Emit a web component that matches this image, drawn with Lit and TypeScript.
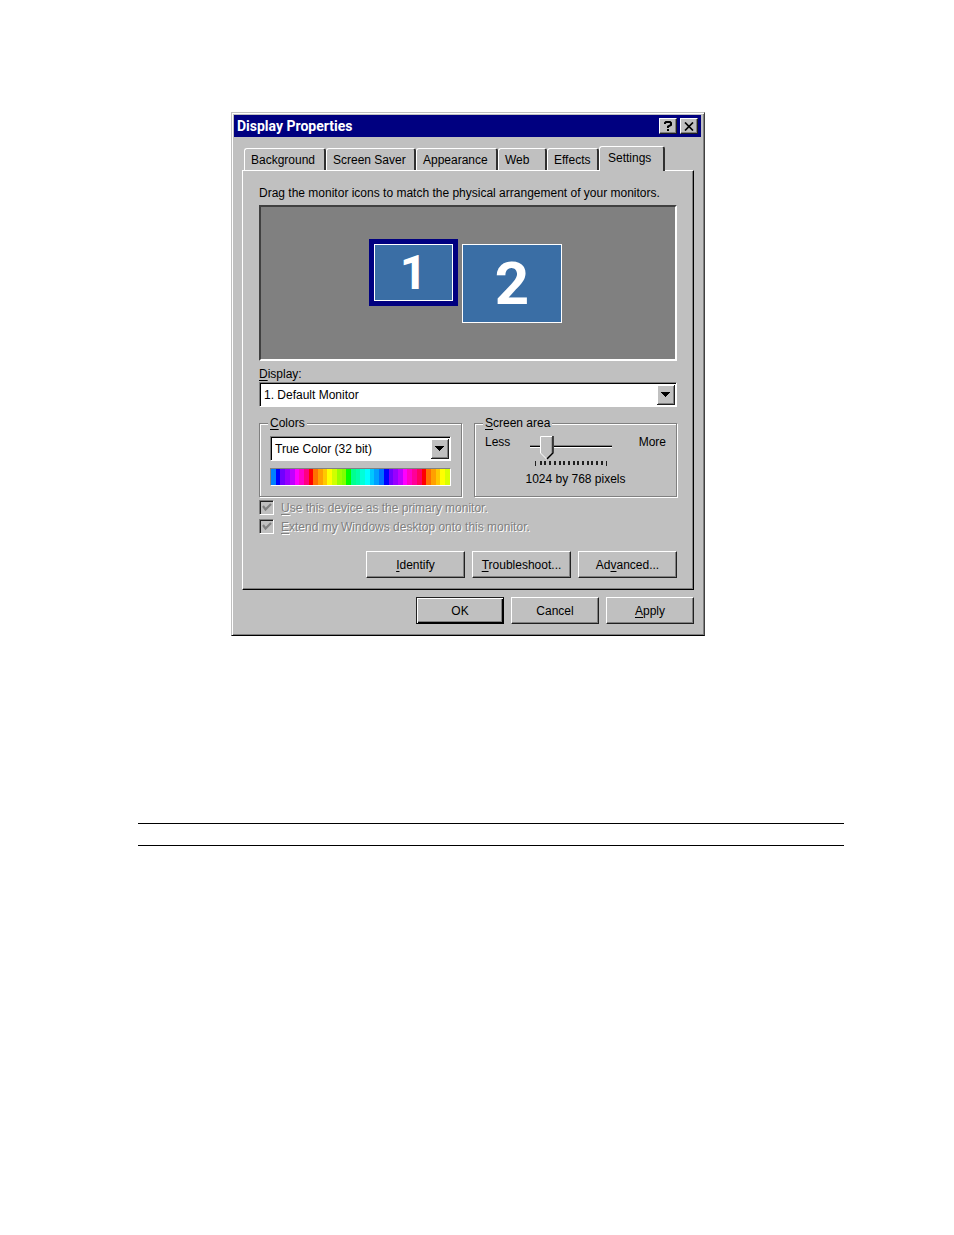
import { LitElement, html, css, svg } from "lit";
import { customElement, state } from "lit/decorators.js";

const SPECTRUM = [
  "#0080ff", "#0000ff", "#7000ff", "#9800ff", "#c000ff", "#ff00ff", "#ff00c8", "#ff0080",
  "#ff0000", "#ff7000", "#ffa000", "#ffc800", "#ffff00", "#d0ff00", "#98ff00", "#80ff00",
  "#00ff00", "#00ff90", "#00ffa8", "#00ffd8", "#00ffff", "#00c8ff", "#00a0ff", "#0070ff",
  "#0000ff", "#7000ff", "#9800ff", "#c000ff", "#ff00ff", "#ff00c8", "#ff0098", "#ff0060",
  "#ff0000", "#ff7000", "#ffa000", "#ffc800", "#ffff00", "#d8ff00",
];

@customElement("app-root")
export class AppRoot extends LitElement {
  @state() private tab = "Settings";
  private tabs = ["Background", "Screen Saver", "Appearance", "Web", "Effects", "Settings"];

  static styles = css`
    :host {
      display: block;
      background: #fff;
      color: #000;
      font: 12px/16px "Liberation Sans", Arial, sans-serif;
    }
    * { box-sizing: border-box; }
    button, select, input { font: inherit; color: inherit; border-radius: 0; margin: 0; }
    .page { padding: 112px 110px 0 138px; }
    .window {
      width: 474px;
      max-width: 100%;
      margin: 0 auto;
      background: #c0c0c0;
      border: 1px solid;
      border-color: #c0c0c0 #404040 #000 #c0c0c0;
      box-shadow: inset 1px 1px #fff, inset -1px -1px #808080;
      padding: 2px 3px 11px 2px;
    }
    .holder { padding-right: 46px; }
    .title {
      display: flex;
      align-items: center;
      gap: 3px;
      height: 22px;
      padding: 0 3px;
      background: #000080;
      color: #fff;
      font-weight: bold;
    }
    .title h1 { flex: 1; margin: 0; font: bold 14px/16px Roboto, Arial, sans-serif; }
    .title button {
      width: 18px;
      height: 16px;
      padding: 0;
      display: grid;
      place-items: center;
    }
    button {
      background: #c0c0c0;
      border: 1px solid;
      border-color: #fff #202020 #202020 #fff;
      box-shadow: inset -1px -1px #808080;
    }
    .body { padding: 9px 7px 0 8px; }
    .tabs {
      display: grid;
      grid-template-columns: 82fr 90fr 82fr 49fr 52fr 66fr;
      align-items: end;
      padding: 0 29px 0 2px;
    }
    .tab {
      height: 22px;
      padding: 0 0 0 6px;
      border-width: 1px 2px 0 1px;
      border-color: #fff #303030 #fff #fff;
      border-radius: 3px 3px 0 0;
      box-shadow: none;
      white-space: nowrap;
      text-align: left;
    }
    .tab.active {
      height: 25px;
      margin-bottom: -1px;
      padding: 0 0 3px 8px;
      position: relative;
    }
    .panel {
      border: 1px solid;
      border-color: #fff #000 #000 #fff;
      box-shadow: inset -1px -1px #808080;
      padding: 14px 16px 11px;
    }
    p { margin: 0; }
    .preview {
      display: flex;
      justify-content: center;
      align-items: flex-start;
      gap: 4px;
      height: 156px;
      margin-top: 4px;
      padding: 32px 5px 0 0;
      background: #808080;
      border: 2px solid;
      border-color: #404040 #fff #fff #404040;
    }
    .monitor {
      display: grid;
      place-items: center;
      background: #3a6ea5;
      color: #fff;
      border: 1px solid #fff;
      font-family: Roboto, Arial, sans-serif;
      font-weight: bold;
    }
    .one { width: 79px; height: 57px; font-size: 48px; line-height: 48px; }
    .selected { border: 5px solid #000080; background: #000080; }
    .two { width: 100px; height: 79px; margin-top: 5px; font-size: 60px; line-height: 60px; }
    .field { display: block; margin-top: 5px; }
    u { text-underline-offset: 2px; }
    .combo {
      display: grid;
      background: #fff;
      border: 1px solid;
      border-color: #808080 #fff #fff #808080;
      box-shadow: inset 1px 1px #000;
      height: 25px;
      padding: 2px 1px 1px 2px;
    }
    .combo select, .combo svg { grid-area: 1 / 1; }
    .combo select {
      appearance: none;
      width: 100%;
      padding: 0 2px;
      border: 0;
      background: transparent;
      outline: 0;
    }
    .combo svg { justify-self: end; pointer-events: none; }
    .groups { display: grid; grid-template-columns: 1fr 1fr; gap: 12px; margin-top: 8px; }
    fieldset {
      min-width: 0;
      margin: 0;
      padding: 5px 10px 8px;
      height: 82px;
      border: 1px solid #808080;
      box-shadow: 1px 1px #fff, inset 1px 1px #fff;
    }
    legend { padding: 0 2px; margin-left: -2px; background: #c0c0c0; }
    .spectrum {
      display: flex;
      height: 18px;
      margin-top: 7px;
      border: 1px solid;
      border-color: #808080 #fff #fff #808080;
    }
    .spectrum i { flex: 1; }
    .range { display: flex; gap: 20px; }
    .range span { line-height: 12px; }
    .range .more { margin-left: auto; }
    .slider { width: 82px; }
    .slider input {
      appearance: none;
      display: block;
      width: 100%;
      height: 24px;
      background: linear-gradient(#808080 0 1px, #000 1px 2px, #fff 2px 3px) center 9px / 100% 3px no-repeat;
    }
    .slider input::-webkit-slider-thumb {
      appearance: none;
      width: 14px;
      height: 24px;
      border: 0;
      background: url("data:image/svg+xml,%3Csvg xmlns='http://www.w3.org/2000/svg' width='14' height='24'%3E%3Cpath d='M0 0H14V17L7 24L0 17Z' fill='%23c0c0c0'/%3E%3Cpath d='M.5 17V.5H12M.5 17L7 23.5' fill='none' stroke='%23fff'/%3E%3Cpath d='M12 1V17L7 22' fill='none' stroke='%23808080'/%3E%3Cpath d='M13 0V17L7 23' fill='none' stroke='%23000' stroke-width='1.3'/%3E%3C/svg%3E");
    }
    .slider svg { display: block; margin: 1px 0 0 5px; }
    .resolution { text-align: center; margin-top: 4px; }
    .check {
      display: flex;
      align-items: center;
      gap: 7px;
      height: 19px;
      color: #808080;
      text-shadow: 1px 1px #fff;
    }
    .check input {
      appearance: none;
      width: 15px;
      height: 15px;
      border: 1px solid;
      border-color: #808080 #fff #fff #808080;
      box-shadow: inset 1px 1px #202020;
      background: url("data:image/svg+xml,%3Csvg xmlns='http://www.w3.org/2000/svg' width='13' height='13'%3E%3Cpath d='M3 5L5.500 8.500L11 3' fill='none' stroke='%23808080' stroke-width='2.2'/%3E%3C/svg%3E");
    }
    .checks { margin-top: 1px; }
    .actions { display: flex; justify-content: flex-end; gap: 7px; }
    .actions button { width: 99px; height: 27px; padding: 0; }
    .inner { margin-top: 15px; }
    .outer { margin-top: 7px; }
    .actions.outer button { width: 88px; }
    .actions .default {
      border-color: #202020 #000 #000 #202020;
      box-shadow: inset 1px 1px #fff, inset -1px -1px #000, inset -2px -2px #808080;
    }
    .rules { height: 23px; margin-top: 187px; border: solid #000; border-width: 1px 0; }
  `;

  private arrow() {
    return svg`<svg width="18" height="20" viewBox="0 0 18 20" shape-rendering="crispEdges" aria-hidden="true">
      <path d="M0 0H18V20H0Z" fill="#202020"/><path d="M0 0H17V19H0Z" fill="#fff"/>
      <path d="M1 1H17V19H1Z" fill="#808080"/><path d="M1 1H16V18H1Z" fill="#c0c0c0"/>
      <path d="M4 7H13V8H12V9H11V10H10V11H9V12H8V11H7V10H6V9H5V8H4Z" fill="#000"/></svg>`;
  }

  private tick(i: number) {
    const end = i === 0 || i === 15;
    return svg`<rect x=${Math.round(i * 4.7)} y="0" width=${end ? 1 : 2} height=${end ? 5 : 4} fill="#202020"/>`;
  }

  render() {
    return html`
      <main class="page">
        <div class="holder">
          <section class="window" aria-label="Display Properties">
            <header class="title">
              <h1>Display Properties</h1>
              <button aria-label="Help">
                <svg width="8" height="10" viewBox="0 0 8 10"><path d="M1 3V2L2 1H6L7 2V4L4 5.5V7" fill="none" stroke="#000" stroke-width="2"/><path d="M3 8H5V10H3Z"/></svg>
              </button>
              <button aria-label="Close">
                <svg width="10" height="9" viewBox="0 0 10 9"><path d="M1 .5L9 8.5M9 .5L1 8.5" stroke="#000" stroke-width="1.7"/></svg>
              </button>
            </header>
            <div class="body">
              <div class="tabs" role="tablist">
                ${this.tabs.map((t) => html`<button
                  role="tab"
                  class="tab ${t === this.tab ? "active" : ""}"
                  aria-selected=${t === this.tab}
                  @click=${() => (this.tab = t)}
                >${t}</button>`)}
              </div>
              <div class="panel">
                <p>Drag the monitor icons to match the physical arrangement of your monitors.</p>
                <div class="preview">
                  <div class="selected"><div class="monitor one">1</div></div>
                  <div class="monitor two">2</div>
                </div>
                <label class="field" for="display"><u>D</u>isplay:</label>
                <div class="combo">
                  <select id="display"><option>1. Default Monitor</option></select>
                  ${this.arrow()}
                </div>
                <div class="groups">
                  <fieldset>
                    <legend><u>C</u>olors</legend>
                    <div class="combo">
                      <select aria-label="Colors"><option>True Color (32 bit)</option></select>
                      ${this.arrow()}
                    </div>
                    <div class="spectrum">
                      ${SPECTRUM.map((c) => html`<i style="background:${c}"></i>`)}
                    </div>
                  </fieldset>
                  <fieldset>
                    <legend><u>S</u>creen area</legend>
                    <div class="range">
                      <span>Less</span>
                      <div class="slider">
                        <input type="range" aria-label="Screen area" min="0" max="14" value="2" />
                        <svg width="74" height="6" shape-rendering="crispEdges" aria-hidden="true">
                          ${Array.from({ length: 16 }, (_, i) => this.tick(i))}
                        </svg>
                      </div>
                      <span class="more">More</span>
                    </div>
                    <p class="resolution">1024 by 768 pixels</p>
                  </fieldset>
                </div>
                <div class="checks">
                  <label class="check"><input type="checkbox" checked disabled /><span><u>U</u>se this device as the primary monitor.</span></label>
                  <label class="check"><input type="checkbox" checked disabled /><span><u>E</u>xtend my Windows desktop onto this monitor.</span></label>
                </div>
                <div class="actions inner">
                  <button><u>I</u>dentify</button>
                  <button><u>T</u>roubleshoot...</button>
                  <button>Ad<u>v</u>anced...</button>
                </div>
              </div>
              <div class="actions outer">
                <button class="default">OK</button>
                <button>Cancel</button>
                <button><u>A</u>pply</button>
              </div>
            </div>
          </section>
        </div>
        <div class="rules"></div>
      </main>
    `;
  }
}
